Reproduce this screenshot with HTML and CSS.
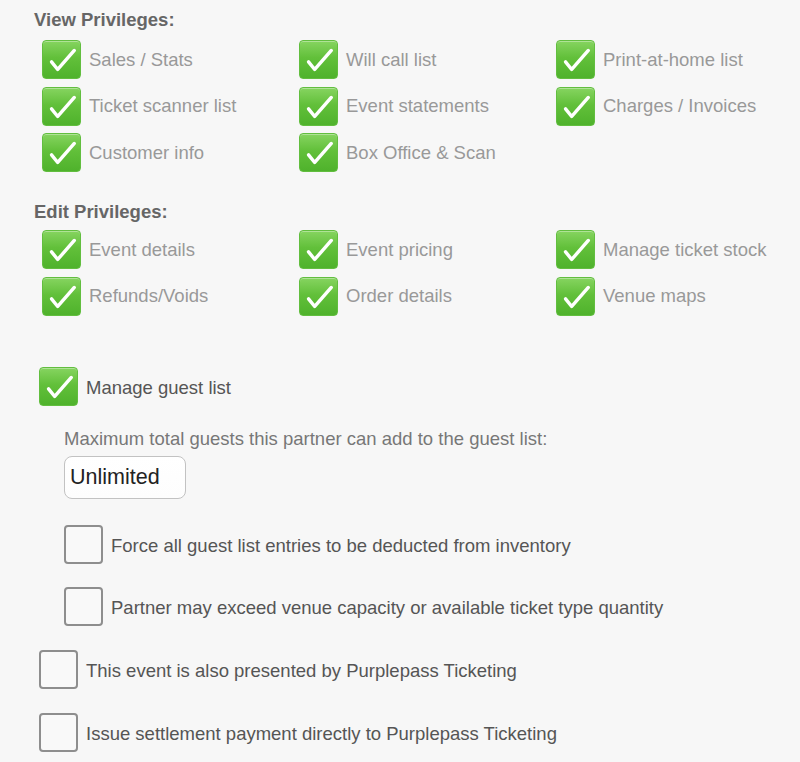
FILE: index.html
```html
<!DOCTYPE html>
<html lang="en">
<head>
  <meta charset="UTF-8">
  <meta name="viewport" content="width=device-width, initial-scale=1.0">
  <title>Partner Privileges</title>
  <link rel="stylesheet" href="styles.css">
</head>
<body>

  <div class="privs">
    <h3 class="privs-title">View Privileges:</h3>
    <div class="privs-grid">
      <div class="check-row"><span class="box on"><svg viewBox="0 0 39 39"><path d="M9 22 L15.5 30 L33 10"/></svg></span><span class="lbl">Sales / Stats</span></div>
      <div class="check-row"><span class="box on"><svg viewBox="0 0 39 39"><path d="M9 22 L15.5 30 L33 10"/></svg></span><span class="lbl">Will call list</span></div>
      <div class="check-row"><span class="box on"><svg viewBox="0 0 39 39"><path d="M9 22 L15.5 30 L33 10"/></svg></span><span class="lbl">Print-at-home list</span></div>
      <div class="check-row"><span class="box on"><svg viewBox="0 0 39 39"><path d="M9 22 L15.5 30 L33 10"/></svg></span><span class="lbl">Ticket scanner list</span></div>
      <div class="check-row"><span class="box on"><svg viewBox="0 0 39 39"><path d="M9 22 L15.5 30 L33 10"/></svg></span><span class="lbl">Event statements</span></div>
      <div class="check-row"><span class="box on"><svg viewBox="0 0 39 39"><path d="M9 22 L15.5 30 L33 10"/></svg></span><span class="lbl">Charges / Invoices</span></div>
      <div class="check-row"><span class="box on"><svg viewBox="0 0 39 39"><path d="M9 22 L15.5 30 L33 10"/></svg></span><span class="lbl">Customer info</span></div>
      <div class="check-row"><span class="box on"><svg viewBox="0 0 39 39"><path d="M9 22 L15.5 30 L33 10"/></svg></span><span class="lbl">Box Office &amp; Scan</span></div>
    </div>
  </div>

  <div class="privs edit">
    <h3 class="privs-title">Edit Privileges:</h3>
    <div class="privs-grid">
      <div class="check-row"><span class="box on"><svg viewBox="0 0 39 39"><path d="M9 22 L15.5 30 L33 10"/></svg></span><span class="lbl">Event details</span></div>
      <div class="check-row"><span class="box on"><svg viewBox="0 0 39 39"><path d="M9 22 L15.5 30 L33 10"/></svg></span><span class="lbl">Event pricing</span></div>
      <div class="check-row"><span class="box on"><svg viewBox="0 0 39 39"><path d="M9 22 L15.5 30 L33 10"/></svg></span><span class="lbl">Manage ticket stock</span></div>
      <div class="check-row"><span class="box on"><svg viewBox="0 0 39 39"><path d="M9 22 L15.5 30 L33 10"/></svg></span><span class="lbl">Refunds/Voids</span></div>
      <div class="check-row"><span class="box on"><svg viewBox="0 0 39 39"><path d="M9 22 L15.5 30 L33 10"/></svg></span><span class="lbl">Order details</span></div>
      <div class="check-row"><span class="box on"><svg viewBox="0 0 39 39"><path d="M9 22 L15.5 30 L33 10"/></svg></span><span class="lbl">Venue maps</span></div>
    </div>
  </div>

  <div class="guest">
    <div class="check-row dark"><span class="box on"><svg viewBox="0 0 39 39"><path d="M9 22 L15.5 30 L33 10"/></svg></span><span class="lbl">Manage guest list</span></div>

    <div class="guest-opts">
      <p class="max-label">Maximum total guests this partner can add to the guest list:</p>
      <input class="max-input" type="text" value="Unlimited">

      <div class="check-row dark first"><span class="box"></span><span class="lbl">Force all guest list entries to be deducted from inventory</span></div>
      <div class="check-row dark"><span class="box"></span><span class="lbl">Partner may exceed venue capacity or available ticket type quantity</span></div>
    </div>
  </div>

  <div class="extra">
    <div class="check-row dark"><span class="box"></span><span class="lbl">This event is also presented by Purplepass Ticketing</span></div>
    <div class="check-row dark"><span class="box"></span><span class="lbl">Issue settlement payment directly to Purplepass Ticketing</span></div>
  </div>

</body>
</html>
```

FILE: styles.css
```css
/* partner privileges form */
body {
  margin: 0;
  padding: 10px 0 0 34px;
  background: #f7f7f7;
  font-family: "Liberation Sans", Arial, sans-serif;
  color: #999;
}

.privs-title {
  margin: 0;
  font-size: 18.5px;
  line-height: 20px;
  font-weight: bold;
  color: #666;
}

.privs-grid {
  display: grid;
  grid-template-columns: 257px 257px 257px;
  row-gap: 7.5px;
  margin: 10px 0 0 8px;
}

.privs.edit {
  margin-top: 30px;
}

.privs.edit .privs-grid {
  margin-top: 8px;
}

.check-row {
  display: flex;
  align-items: center;
}

.box {
  flex: none;
  width: 39px;
  height: 39px;
  box-sizing: border-box;
  border-radius: 4px;
  border: 2px solid #8e8e8e;
  background: #f9f9f9;
}

.box.on {
  border: 1px solid #62be3f;
  background: linear-gradient(to bottom, #86d460 0%, #62c03a 45%, #4fb22c 100%);
  box-shadow: inset 0 1px 0 rgba(255, 255, 255, 0.35);
}

.box svg {
  display: block;
  width: 37px;
  height: 37px;
}

.box svg path {
  fill: none;
  stroke: #fff;
  stroke-width: 3.6;
  stroke-linecap: round;
  stroke-linejoin: round;
}

.lbl {
  margin-left: 8px;
  font-size: 18.5px;
  line-height: 22px;
}

.check-row.dark .lbl {
  color: #555;
  padding-top: 3px;
}

.guest {
  margin: 51px 0 0 5px;
}

.guest-opts {
  padding-left: 25px;
}

.max-label {
  margin: 23px 0 0;
  font-size: 18.5px;
  line-height: 20px;
  color: #777;
}

.max-input {
  display: block;
  margin-top: 7px;
  width: 122px;
  height: 43px;
  box-sizing: border-box;
  padding: 0 5px;
  border: 1px solid #c2c2c2;
  border-radius: 8px;
  background: linear-gradient(to bottom, #fff 0%, #fdfdfd 100%);
  font-family: "Liberation Sans", Arial, sans-serif;
  font-size: 21.5px;
  color: #222;
}

.guest-opts .check-row {
  margin-top: 23px;
}

.guest-opts .check-row.first {
  margin-top: 26px;
}

.extra {
  padding-left: 5px;
}

.extra .check-row {
  margin-top: 24px;
}
```
